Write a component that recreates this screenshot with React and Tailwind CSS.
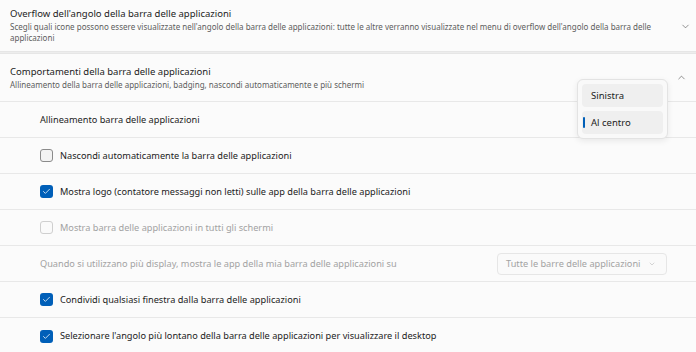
import { ChevronDown, ChevronUp, Check } from 'lucide-react';

const font = { fontFamily: '"Noto Sans", "Open Sans", sans-serif' };

function Box({ checked, disabled }) {
    if (checked) {
        return (
            <span className="w-[13px] h-[13px] rounded-[3px] bg-[#005fb8] flex items-center justify-center shrink-0">
                <Check size={9} strokeWidth={2} className="text-white" />
            </span>
        );
    }
    return (
        <span
            className={`w-[13px] h-[13px] rounded-[3px] border shrink-0 ${disabled ? 'border-[#cfcfcf] bg-[#fafafa]' : 'border-[#8b8b8b] bg-[#f3f3f3]'}`}
        />
    );
}

function Row({ children, last }) {
    return (
        <div className={`h-9 flex items-center pl-10 pr-[29px] ${last ? '' : 'border-b border-[#e8e8e8]'}`}>
            {children}
        </div>
    );
}

function CheckRow({ label, checked, disabled, last }) {
    return (
        <Row last={last}>
            <Box checked={checked} disabled={disabled} />
            <span className={`ml-[7px] text-[9.2px] ${disabled ? 'text-[#a2a2a2]' : 'text-[#1b1b1b]'}`}>{label}</span>
        </Row>
    );
}

export default function App() {
    return (
        <div className="w-[696px] h-[352px] overflow-hidden bg-[#ededed]" style={font}>
            <div className="h-[52px] bg-[#fbfbfb] border-b border-[#e6e6e6] flex pl-[10px] pr-[5px] pt-[7px]">
                <div className="flex-1">
                    <div className="text-[9.5px] text-[#1b1b1b] leading-[14px]">Overflow dell'angolo della barra delle applicazioni</div>
                    <div className="text-[8px] text-[#5d5d5d] leading-[11px] pr-[18px]">
                        Scegli quali icone possono essere visualizzate nell'angolo della barra delle applicazioni: tutte le altre verranno visualizzate nel menu di overflow dell'angolo della barra delle applicazioni
                    </div>
                </div>
                <ChevronDown size={11} strokeWidth={1.2} className="text-[#3a3a3a] mt-[14px]" />
            </div>

            <div className="mt-[1px] bg-[#fbfbfb] border-t border-[#e6e6e6] relative">
                <div className="h-[48px] flex items-center pl-[10px] pr-[9px] border-b border-[#e8e8e8]">
                    <div className="flex-1">
                        <div className="text-[9.5px] text-[#1b1b1b] leading-[14px]">Comportamenti della barra delle applicazioni</div>
                        <div className="text-[8px] text-[#5d5d5d] leading-[11px]">Allineamento della barra delle applicazioni, badging, nascondi automaticamente e più schermi</div>
                    </div>
                    <ChevronUp size={11} strokeWidth={1.2} className="text-[#3a3a3a]" />
                </div>

                <Row>
                    <span className="text-[9.2px] text-[#1b1b1b]">Allineamento barra delle applicazioni</span>
                </Row>
                <CheckRow label="Nascondi automaticamente la barra delle applicazioni" />
                <CheckRow checked label="Mostra logo (contatore messaggi non letti) sulle app della barra delle applicazioni" />
                <CheckRow disabled label="Mostra barra delle applicazioni in tutti gli schermi" />
                <Row>
                    <span className="flex-1 text-[9.2px] text-[#a2a2a2]">Quando si utilizzano più display, mostra le app della mia barra delle applicazioni su</span>
                    <div className="w-[170px] h-[22px] rounded-[4px] border border-[#e6e6e6] bg-[#fafafa] flex items-center pl-[8px] pr-[10px]">
                        <span className="flex-1 whitespace-nowrap text-[9.2px] text-[#a2a2a2]">Tutte le barre delle applicazioni</span>
                        <ChevronDown size={8} strokeWidth={1.3} className="text-[#a2a2a2]" />
                    </div>
                </Row>
                <CheckRow checked label="Condividi qualsiasi finestra dalla barra delle applicazioni" />
                <CheckRow checked last label="Selezionare l'angolo più lontano della barra delle applicazioni per visualizzare il desktop" />

                <div className="absolute left-[577px] top-[25px] w-[91px] h-[60px] rounded-[6px] border border-[#e3e3e3] bg-[#f9f9f9] shadow-[0_2px_6px_rgba(0,0,0,0.08)] p-[4px] flex flex-col gap-[4px]">
                    <div className="h-[24px] rounded-[4px] bg-[#efefef] flex items-center pl-[9px] text-[9.5px] text-[#1b1b1b]">Sinistra</div>
                    <div className="h-[23px] rounded-[4px] bg-[#efefef] flex items-center text-[9.5px] text-[#1b1b1b] relative pl-[9px]">
                        <span className="absolute left-[1px] top-[6px] w-[2px] h-[11px] rounded-full bg-[#005fb8]" />
                        Al centro
                    </div>
                </div>
            </div>
        </div>
    );
}
